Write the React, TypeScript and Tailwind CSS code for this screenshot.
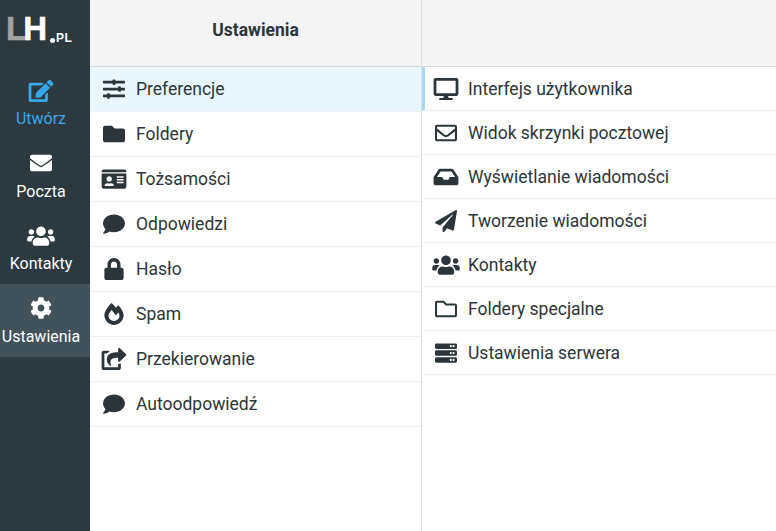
import type { IconType } from "react-icons";
import {
  FaEdit,
  FaEnvelope,
  FaUsers,
  FaCog,
  FaSlidersH,
  FaFolder,
  FaIdCard,
  FaComment,
  FaLock,
  FaFireAlt,
  FaShareSquare,
  FaDesktop,
  FaRegEnvelope,
  FaInbox,
  FaPaperPlane,
  FaRegFolder,
  FaServer,
} from "react-icons/fa";

interface NavItem {
  label: string;
  icon: IconType;
  active?: boolean;
  selected?: boolean;
}

const mainNav: NavItem[] = [
  { label: "Utwórz", icon: FaEdit, active: true },
  { label: "Poczta", icon: FaEnvelope },
  { label: "Kontakty", icon: FaUsers },
  { label: "Ustawienia", icon: FaCog, selected: true },
];

const sections: NavItem[] = [
  { label: "Preferencje", icon: FaSlidersH, selected: true },
  { label: "Foldery", icon: FaFolder },
  { label: "Tożsamości", icon: FaIdCard },
  { label: "Odpowiedzi", icon: FaComment },
  { label: "Hasło", icon: FaLock },
  { label: "Spam", icon: FaFireAlt },
  { label: "Przekierowanie", icon: FaShareSquare },
  { label: "Autoodpowiedź", icon: FaComment },
];

const prefs: NavItem[] = [
  { label: "Interfejs użytkownika", icon: FaDesktop, selected: true },
  { label: "Widok skrzynki pocztowej", icon: FaRegEnvelope },
  { label: "Wyświetlanie wiadomości", icon: FaInbox },
  { label: "Tworzenie wiadomości", icon: FaPaperPlane },
  { label: "Kontakty", icon: FaUsers },
  { label: "Foldery specjalne", icon: FaRegFolder },
  { label: "Ustawienia serwera", icon: FaServer },
];

export default function App() {
  return (
    <div className="flex h-[531px] w-[776px] overflow-hidden bg-white font-['Roboto',sans-serif] text-[#2c363a]">
      <nav className="flex w-[90px] shrink-0 flex-col bg-[#2c393e]">
        <div className="flex h-[66.6px] shrink-0 items-start pl-[6px] pt-[11px] font-['Liberation_Sans',sans-serif] font-bold">
          <span className="text-[33px] leading-[36px] tracking-[-3px] text-[#a3a3a3] [-webkit-text-stroke:0.5px_#a3a3a3]">L</span>
          <span className="text-[33px] leading-[36px] text-white [-webkit-text-stroke:0.5px_white]">H</span>
          <span className="ml-[3px] mt-[27px] h-[5px] w-[5px] rounded-full bg-white" />
          <span className="ml-[1px] mt-[21px] text-[12px] leading-[12px] tracking-[0.5px] text-white">PL</span>
        </div>
        {mainNav.map((item) => (
          <a
            key={item.label}
            className={`flex h-[72.6px] flex-col items-center pr-2 pt-[13px] text-base leading-[20px] ${
              item.active ? "text-[#37a8ec]" : "text-white"
            } ${item.selected ? "bg-[#41525a]" : ""}`}
          >
            <item.icon className="mb-[7.4px] h-[22px] w-[28px] shrink-0" />
            <span className="whitespace-nowrap">{item.label}</span>
          </a>
        ))}
      </nav>

      <section className="flex w-[332px] shrink-0 flex-col border-r border-[#dee2e6]">
        <header className="flex h-[67px] shrink-0 items-center justify-center border-b border-[#d4dbde] bg-[#f4f4f4] pb-[6px] text-[17.5px] font-bold">
          Ustawienia
        </header>
        <ul>
          {sections.map((item) => (
            <li
              key={item.label}
              className={`flex h-[45px] items-center border-b border-[#f0f0f0] pl-3 text-[17.5px] ${
                item.selected ? "bg-[#e9f6fd]" : ""
              }`}
            >
              <span className="flex w-[24px] justify-center">
                <item.icon className="h-[22px] w-[28px] shrink-0" />
              </span>
              <span className="ml-[10px]">{item.label}</span>
            </li>
          ))}
        </ul>
      </section>

      <section className="flex min-w-0 flex-1 flex-col">
        <header className="h-[67px] shrink-0 border-b border-[#d4dbde] bg-[#f4f4f4]" />
        <ul>
          {prefs.map((item) => (
            <li
              key={item.label}
              className={`flex h-[44px] items-center border-b border-[#f0f0f0] text-[17.5px] ${
                item.selected ? "border-l-[3px] border-l-[#a8dcf5] pl-[8px]" : "ml-px pl-[10px]"
              }`}
            >
              <span className="flex w-[25px] justify-center">
                <item.icon className="h-[22px] w-[28px] shrink-0" />
              </span>
              <span className="ml-[10px] pt-px">{item.label}</span>
            </li>
          ))}
        </ul>
      </section>
    </div>
  );
}
